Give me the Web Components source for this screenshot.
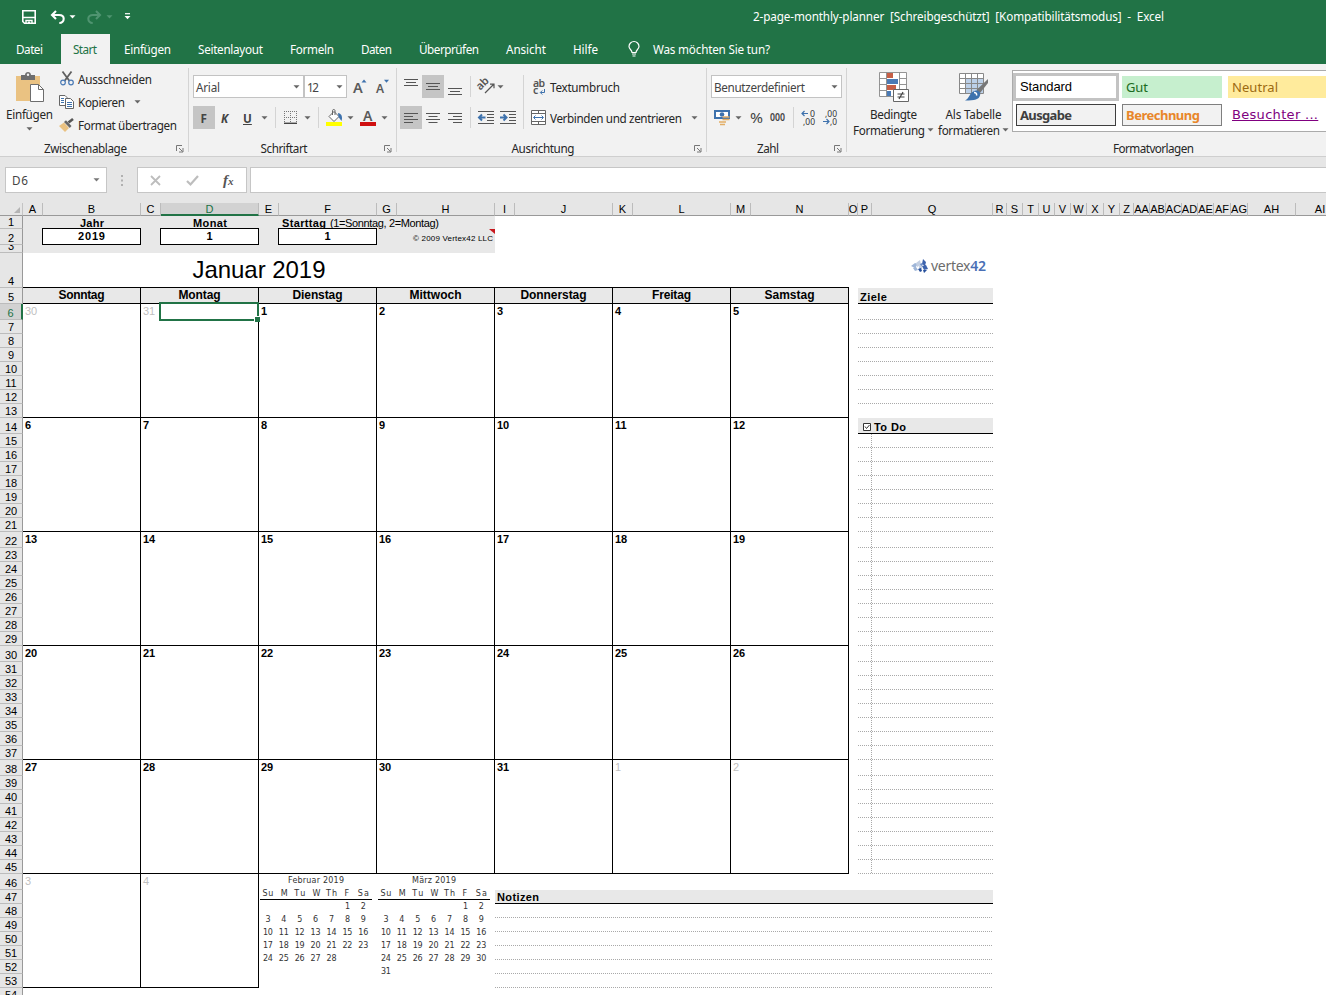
<!DOCTYPE html>
<html lang="de">
<head>
<meta charset="utf-8">
<title>2-page-monthly-planner - Excel</title>
<style>
  html, body { margin: 0; height: 100%; overflow: hidden; background: #fff; }
</style>
</head>
<body>
<planner-app></planner-app>
<script>
const ICONS = {
  save: [14, 14, `<path d="M.8.8h12.4v12.4H2.5L.8 11.5z" fill="none" stroke="#fff" stroke-width="1.6"/><path d="M1 7.500h12M4 13v-2.500h6V13" fill="none" stroke="#fff" stroke-width="1.4"/><path d="M6 11.500h2V13H6z" fill="#fff"/>`],
  undo: [15, 14, `<path d="M6 1 2 5l4 4M2.5 5H9c3 0 4.700 1.500 4.700 3.800S12 13 9.300 13" fill="none" stroke="#fff" stroke-width="2.100"/>`],
  redo: [15, 14, `<path d="M9 1l4 4-4 4M12.500 5H6C3 5 1.300 6.500 1.300 8.800S3 13 5.700 13" fill="none" stroke="#4f9470" stroke-width="2.100"/>`],
  more: [7, 7, `<path d="M1 .7h5" stroke="#fff" stroke-width="1.200"/><path d="M.5 3h6l-3 3.200z" fill="#fff"/>`],
  caret: [7, 4, `<path d="M.5.300h6L3.500 3.500z" fill="currentColor"/>`],
  bulb: [12, 16, `<path d="M4 11.500C4 9 1 8 1 5.500a5 5 0 0 1 10 0C11 8 8 9 8 11.500z" fill="none" stroke="#fff" stroke-width="1.200"/><path d="M4 13h4M4.500 15h3" stroke="#fff" stroke-width="1.200"/>`],
  paste: [30, 31, `<path d="M1 4h24v25H1z" fill="#eac282"/><path d="M6 3h4c0-4 6-4 6 0h4v5H6z" fill="#6d6d6d"/><circle cx="13" cy="2.800" r="1.200" fill="#f2f2f2"/><path d="M15.500 12.500h8l5 5v12h-13z" fill="#fff" stroke="#6d6d6d"/><path d="M23.500 12.500v5h5" fill="none" stroke="#6d6d6d"/>`],
  cut: [14, 15, `<path d="M2.500.500 9.500 10M11.500.500 4.500 10" stroke="#5f5f5f" stroke-width="1.800"/><circle cx="3" cy="11.500" r="2.300" fill="none" stroke="#4a7ab5" stroke-width="1.200"/><circle cx="11" cy="11.500" r="2.300" fill="none" stroke="#4a7ab5" stroke-width="1.200"/>`],
  copy: [15, 14, `<path d="M.500.500H6l2 2v8H.500z" fill="#fff" stroke="#666"/><path d="M6.500 3.500h5l3 3v7h-8z" fill="#fff" stroke="#666"/><path d="M2 3.500h3M2 5.500h3M2 7.500h3M8 7.500h5M8 9.500h5M8 11.500h5" stroke="#3e72ad"/>`],
  brush: [15, 14, `<path d="M5 4.500 10 10l-4 4L0 8z" fill="#eac282"/><path d="M5 4 7 2.200 12.500 8l-1.700 2z" fill="#666"/><path d="M9.500 4.500 14 1" stroke="#555" stroke-width="2.600"/>`],
  launcher: [8, 8, `<path d="M.500 6V.500H6" fill="none" stroke="#777"/><path d="m3 3 3.500 3.500" stroke="#777"/><path d="M7 3v4H3" fill="none" stroke="#777"/>`],
  grow: [14, 15, `<text x="0" y="13.500" font-size="14.500" font-weight="600" fill="#5a5a5a">A</text><path d="M8.500 3.500h5L11 .500z" fill="#3e72ad"/>`],
  shrink: [14, 15, `<text x="0" y="13.500" font-size="12" font-weight="600" fill="#5a5a5a">A</text><path d="M8 .800h5L10.500 3.800z" fill="#3e72ad"/>`],
  borders: [13, 13, `<path d="M.500 0v12M6.500 0v12M12.500 0v12M0 .500h13M0 6.500h13" stroke="#777" stroke-dasharray="1 1" fill="none"/><path d="M0 12.300h13" stroke="#444" stroke-width="1.400"/>`],
  fill: [17, 17, `<path d="M3 7.500 8 2.500l5 5-5 5z" fill="#fff" stroke="#666"/><path d="M6.500 6V1.500c0-1.300 2.500-1.300 2.500 0V6" fill="none" stroke="#666"/><path d="M12 4c3 .500 5 3 3.500 8l-3-4z" fill="#3e72ad"/><path d="M0 13h16v4H0z" fill="#ffff00"/>`],
  fontcolor: [16, 17, `<text x="3" y="11.500" font-size="14" font-weight="600" fill="#5a5a5a">A</text><path d="M0 13h16v4H0z" fill="#d01010"/>`],
  vtop: [14, 7, `<path d="M0 .500h14M2 3.500h10M0 6.500h14" stroke="#555"/>`],
  left: [14, 10, `<path d="M0 .500h14M0 3.500h9M0 6.500h14M0 9.500h9" stroke="#555"/>`],
  center: [14, 10, `<path d="M0 .500h14M2.500 3.500h9M0 6.500h14M2.500 9.500h9" stroke="#555"/>`],
  right: [14, 10, `<path d="M0 .500h14M5 3.500h9M0 6.500h14M5 9.500h9" stroke="#555"/>`],
  orient: [17, 15, `<text transform="translate(3 11) rotate(-45)" x="-1" y="0" font-size="11" font-weight="600" fill="#555">ab</text><path d="M7 14 15.500 5.500M12 5.200h4v4" fill="none" stroke="#555" stroke-width="1.200"/>`],
  outdent: [16, 13, `<path d="M0 .500h16M9 3.500h7M9 6.500h7M9 9.500h7M0 12.500h16" stroke="#555"/><path d="M7.500 6.500h-6M4 3.500l-3 3 3 3" fill="none" stroke="#3e72ad" stroke-width="2"/>`],
  indent: [16, 13, `<path d="M0 .500h16M9 3.500h7M9 6.500h7M9 9.500h7M0 12.500h16" stroke="#555"/><path d="M0 6.500h6M3.500 3.500l3 3-3 3" fill="none" stroke="#3e72ad" stroke-width="2"/>`],
  wrap: [13, 16, `<text x="0" y="7.500" font-size="10.500" font-weight="600" fill="#555" textLength="12">ab</text><text x="0" y="15" font-size="10.500" font-weight="600" fill="#555">c</text><path d="M11.500 10v3.500H7.500M9.300 11.500l-2 2 2 2" fill="none" stroke="#3e72ad"/>`],
  merge: [15, 15, `<path d="M.500.500h14v14H.500zM0 3.500h15M0 11.500h15M7.500 0v3.500M7.500 11.500V15" fill="#fff" stroke="#666"/><path d="M3 7.500h9M4.500 5.500l-2 2 2 2M10.500 5.500l2 2-2 2" fill="none" stroke="#3e72ad"/>`],
  money: [17, 17, `<path d="M0 1h16v9H0z" fill="#3e72ad"/><path d="M2 3h12v5H2z" fill="#fff"/><circle cx="8" cy="5.500" r="2.300" fill="#3e72ad"/><path d="M8.500 8h7M8.500 10.500h7M5 13h7M6 15.500h5" stroke="#e3ae66" stroke-width="1.700"/>`],
  percent: [13, 13, `<text x="0" y="12" font-size="15" fill="#444" textLength="13" lengthAdjust="spacingAndGlyphs">%</text>`],
  thousands: [15, 10, `<text x="0" y="8" font-size="10" font-weight="600" fill="#444" textLength="15" lengthAdjust="spacingAndGlyphs">000</text>`],
  decinc: [15, 15, `<text x="9" y="6.500" font-size="9" fill="#333" textLength="5" lengthAdjust="spacingAndGlyphs">0</text><text x="2" y="14.500" font-size="9" fill="#333" textLength="12" lengthAdjust="spacingAndGlyphs">,00</text><path d="M7 3.500H1M3.500 1 1 3.500 3.500 6" fill="none" stroke="#3e72ad" stroke-width="1.200"/>`],
  decdec: [15, 15, `<text x="2" y="6.500" font-size="9" fill="#333" textLength="12" lengthAdjust="spacingAndGlyphs">,00</text><text x="7" y="14.500" font-size="9" fill="#333" textLength="7" lengthAdjust="spacingAndGlyphs">,0</text><path d="M0 11.500h6M3.500 9 6 11.500 3.500 14" fill="none" stroke="#3e72ad" stroke-width="1.200"/>`],
  conditional: [30, 31, `<path d="M.500.500h27v24H.500z" fill="#fff"/><path d="M8 1h6v5H8zM8 13h9v5H8z" fill="#c65f46"/><path d="M8 7h11v5H8zM8 19h4v5H8z" fill="#4a7ab5"/><path d="M.500.500h27v24H.500zM.500 6.500h7M20.500 6.500h7M.500 12.500h7M20.500 12.500h7M.500 18.500h7M7.500.500v24M20.500.500v24" fill="none" stroke="#888" stroke-width=".9"/><path d="M14.500 17.500h15v12h-15z" fill="#fff" stroke="#666"/><path d="M18.500 22h7M18.500 25h7M24 20l-4 7" stroke="#444" stroke-width="1.200"/>`],
  table: [30, 30, `<path d="M.500.500h24v20H.500z" fill="#fff"/><path d="M7 6h17.500v14.500H7z" fill="#bcd0e8"/><path d="M.500.500h24v20H.500zM.500 5.500h24M.500 10.500h24M.500 15.500h24M6.500.500v20M12.500.500v20M18.500.500v20" fill="none" stroke="#888"/><path d="M29 6v4l-8 10-3.500-3z" fill="#777"/><path d="M17 17.500c3 0 5 2 4 5-1 4-5 5-15 5 5-2 4-9 11-10z" fill="#3e72ad"/><path d="M15 19.500c2 0 3 1 2.500 3" fill="none" stroke="#fff" stroke-width="1.500"/>`],
  cancel: [11, 11, `<path d="m1 1 9 9M10 1l-9 9" stroke="#bdbdbd" stroke-width="1.800"/>`],
  accept: [13, 11, `<path d="m1 6 3.500 3.500L12 1" fill="none" stroke="#bdbdbd" stroke-width="2.200"/>`],
  dots: [2, 12, `<path d="M0 0h2v2H0zM0 4.500h2v2H0zM0 9h2v2H0z" fill="#b0b0b0"/>`],
  corner: [6, 6, `<path d="M6 0v6H0z" fill="#b4b4b4"/>`],
  note: [6, 5, `<path d="M0 0h6v5z" fill="#c8171d"/>`],
  check: [8, 8, `<path d="M.500.500h7v7h-7z" fill="#fff" stroke="#333"/><path d="m2 3.500 1.500 2L6.500 2" fill="none" stroke="#333"/>`],
  vertex: [17, 15, `<path d="M0 7l4-3 3 1-3 4zM2 9l3-1 2 3-3 1z" fill="#9fb6d8"/><path d="m5 4 4-3 1 5-4 2zM8 7l3-1v4H8z" fill="#c3cfe2"/><path d="m12 0 3 3-1 4-3-2zM11 7l4-1 2 4-4 1z" fill="#3d63ad"/><path d="m7 10 3-1 1 3-2 1zM12 11l4 0-3 3z" fill="#27509c"/><path d="m10 4 2 1-1 2-2-1z" fill="#6f8fc7"/>`],
};

class UiIcon extends HTMLElement {
  constructor() {
    super();
    this.attachShadow({ mode: 'open' });
  }

  connectedCallback() {
    const [w, h, art] = ICONS[this.getAttribute('name')];
    this.shadowRoot.innerHTML = `
      <style>
        :host { display: block; flex: none; width: ${w}px; height: ${h}px; }
        svg { display: block; overflow: visible; font-family: "Noto Sans", sans-serif; }
      </style>
      <svg width="${w}" height="${h}" viewBox="0 0 ${w} ${h}">${art}</svg>
    `;
  }
}
customElements.define('ui-icon', UiIcon);

// Text with a fixed advance: tracking is adjusted until it fills `w` pixels.
class UiLabel extends HTMLElement {
  constructor() {
    super();
    this.attachShadow({ mode: 'open' });
  }

  connectedCallback() {
    const w = Number(this.getAttribute('w'));
    this.shadowRoot.innerHTML = `
      <style>
        :host { display: flex; flex: none; width: ${w}px; line-height: 16px; }
        span { flex: none; white-space: pre; }
      </style>
      <span><slot></slot></span>
    `;
    const span = this.shadowRoot.querySelector('span');
    const count = this.textContent.length;
    if (count > 1) {
      const natural = span.getBoundingClientRect().width;
      span.style.letterSpacing = `${(w - natural) / (count - 1)}px`;
    }
  }
}
customElements.define('ui-label', UiLabel);

class TitleBar extends HTMLElement {
  constructor() {
    super();
    this.attachShadow({ mode: 'open' });
  }

  connectedCallback() {
    this.shadowRoot.innerHTML = `
      <style>
        :host {
          display: flex;
          flex: none;
          align-items: center;
          box-sizing: border-box;
          height: 34px;
          padding: 0 0 1px 22px;
          background: #217346;
          color: #fff;
        }
        .undo { margin-left: 14px; }
        .drop { margin-left: 4px; }
        .redo { margin-left: 11px; }
        .faded { color: #4f9470; }
        .more { margin-left: 11px; }
        .title { margin: -2px 0 0 622px; }
      </style>
      <ui-icon name="save"></ui-icon>
      <ui-icon class="undo" name="undo"></ui-icon>
      <ui-icon class="drop" name="caret"></ui-icon>
      <ui-icon class="redo" name="redo"></ui-icon>
      <ui-icon class="drop faded" name="caret"></ui-icon>
      <ui-icon class="more" name="more"></ui-icon>
      <ui-label class="title" w="411">2-page-monthly-planner  [Schreibgeschützt]  [Kompatibilitätsmodus]  -  Excel</ui-label>
    `;
  }
}
customElements.define('title-bar', TitleBar);

class RibbonTabs extends HTMLElement {
  constructor() {
    super();
    this.attachShadow({ mode: 'open' });
  }

  connectedCallback() {
    const tabs = [
      ['Datei', 27], ['Start', 24], ['Einfügen', 47], ['Seitenlayout', 65], ['Formeln', 44],
      ['Daten', 31], ['Überprüfen', 60], ['Ansicht', 40], ['Hilfe', 25],
    ];
    this.shadowRoot.innerHTML = `
      <style>
        :host { display: flex; flex: none; height: 30px; padding-left: 2px; background: #217346; color: #fff; }
        .tab { display: flex; align-items: center; padding: 0 13px 0 14px; }
        .active { margin: 0 1px 0 5px; padding: 0 13px 0 12px; background: #f2f2f2; color: #217346; }
        .active + .tab { padding-left: 13px; }
        .ask { display: flex; align-items: center; gap: 13px; margin-left: 17px; }
      </style>
      ${tabs.map(([name, w]) => `
        <div class="tab ${name === 'Start' ? 'active' : ''}"><ui-label w="${w}">${name}</ui-label></div>
      `).join('')}
      <div class="ask"><ui-icon name="bulb"></ui-icon><ui-label w="117">Was möchten Sie tun?</ui-label></div>
    `;
  }
}
customElements.define('ribbon-tabs', RibbonTabs);

class RibbonGroup extends HTMLElement {
  constructor() {
    super();
    this.attachShadow({ mode: 'open' });
  }

  connectedCallback() {
    const launcher = this.hasAttribute('launcher') ? '<ui-icon name="launcher"></ui-icon>' : '';
    this.shadowRoot.innerHTML = `
      <style>
        :host {
          display: flex;
          flex: none;
          flex-direction: column;
          box-sizing: border-box;
          width: ${this.getAttribute('width')}px;
        }
        .inner {
          flex: none;
          box-sizing: border-box;
          height: 84px;
          margin-top: 4px;
          border-right: 1px solid #d4d4d4;
        }
        .body { height: 72px; }
        .caption { display: grid; grid-template-columns: 1fr auto 1fr; align-items: center; height: 16px; }
        .caption ui-label { grid-column: 2; }
        .caption ui-icon { justify-self: end; margin: 1px -13px 0 0; }
        :host([launcher]) .caption { padding-right: 17px; }
      </style>
      <div class="inner">
        <div class="body"><slot></slot></div>
        <div class="caption"><ui-label w="${this.getAttribute('caption-width')}">${this.getAttribute('caption')}</ui-label>${launcher}</div>
      </div>
    `;
  }
}
customElements.define('ribbon-group', RibbonGroup);

class ComboBox extends HTMLElement {
  constructor() {
    super();
    this.attachShadow({ mode: 'open' });
  }

  connectedCallback() {
    this.shadowRoot.innerHTML = `
      <style>
        :host {
          display: flex;
          flex: none;
          align-items: center;
          justify-content: space-between;
          box-sizing: border-box;
          width: ${this.getAttribute('width')}px;
          height: 23px;
          padding: 0 3px 0 2px;
          border: 1px solid #c3c3c3;
          background: #fff;
          color: #444;
        }
        ui-icon { color: #666; }
      </style>
      <slot></slot><ui-icon name="caret"></ui-icon>
    `;
  }
}
customElements.define('combo-box', ComboBox);

class RibbonBar extends HTMLElement {
  constructor() {
    super();
    this.attachShadow({ mode: 'open' });
  }

  connectedCallback() {
    const gap = (px) => `style="margin-left:${px}px"`;
    this.shadowRoot.innerHTML = `
      <style>
        :host {
          display: flex;
          flex: none;
          box-sizing: border-box;
          height: 93px;
          overflow: hidden;
          border-bottom: 1px solid #cfcfcf;
          background: #f2f2f2;
          color: #262626;
        }
        .row { display: flex; align-items: center; height: 23px; }
        .row + .row { margin-top: 8px; }
        .rows { padding-top: 7px; }
        .sep { flex: none; width: 1px; height: 21px; background: #d4d4d4; }
        .tall { height: 54px; }
        .caret { color: #666; }
        .on { display: flex; align-items: center; justify-content: center; width: 22px; height: 23px; background: #c5c5c5; }
        .clip { display: flex; }
        .commands { margin-top: -1px; }
        .commands .row + .row { margin-top: 0; }
        .paste { display: flex; flex-direction: column; align-items: center; width: 59px; padding-top: 4px; }
        .paste ui-label { margin-top: 3px; }
        .paste .caret { margin-top: 5px; }
        .glyph { color: #444; font-weight: 700; }
        .align { display: flex; }
        .styles { display: flex; }
        .big { display: flex; flex-direction: column; align-items: center; padding-top: 4px; }
        .big .line { display: flex; align-items: center; height: 16px; gap: 2px; }
        .gallery {
          display: grid;
          grid-template-columns: 106px 106px 106px;
          grid-template-rows: 28px 28px;
          align-content: start;
          flex: none;
          width: 330px;
          height: 58px;
          margin: 2px 0 0 3px;
          padding: 2px 0 0 0;
          border: 1px solid #ababab;
          background: #fff;
          font-size: 13px;
        }
        .tile {
          display: flex;
          align-items: center;
          box-sizing: border-box;
          width: 100px;
          height: 22px;
          margin: 3px;
          padding-left: 4px;
        }
        .standard { width: 106px; height: 28px; margin: 0; padding-left: 4px; border: 3px solid #c3c3c3; color: #000; font-family: "Liberation Sans", sans-serif; }
        .good { background: #c6efce; color: #1b6b20; }
        .neutral { width: 120px; background: #ffeb9c; color: #9c6a10; }
        .output { border: 1px solid #3f3f3f; background: #f2f2f2; color: #3f3f3f; font-weight: 700; padding-left: 3px; }
        .calc { border: 1px solid #7f7f7f; background: #f2f2f2; color: #e8862a; font-weight: 700; padding-left: 3px; }
        .visited { color: #800080; font-family: "DejaVu Sans", sans-serif; text-decoration: underline; }
      </style>
      <ribbon-group width="189" caption="Zwischenablage" caption-width="83" launcher>
        <div class="clip">
          <div class="paste">
            <ui-icon name="paste"></ui-icon>
            <ui-label w="47">Einfügen</ui-label>
            <ui-icon class="caret" name="caret"></ui-icon>
          </div>
          <div class="commands">
            <div class="row"><ui-icon ${gap(1)} name="cut"></ui-icon><ui-label ${gap(4)} w="74">Ausschneiden</ui-label></div>
            <div class="row"><ui-icon name="copy"></ui-icon><ui-label ${gap(4)} w="47">Kopieren</ui-label><ui-icon class="caret" ${gap(9)} name="caret"></ui-icon></div>
            <div class="row"><ui-icon name="brush"></ui-icon><ui-label ${gap(4)} w="99">Format übertragen</ui-label></div>
          </div>
        </div>
      </ribbon-group>
      <ribbon-group width="208" caption="Schriftart" caption-width="47" launcher>
        <div class="rows">
          <div class="row" style="padding-left:4px">
            <combo-box width="111"><ui-label w="24">Arial</ui-label></combo-box>
            <combo-box width="43"><ui-label w="12">12</ui-label></combo-box>
            <ui-icon ${gap(6)} name="grow"></ui-icon>
            <ui-icon ${gap(9)} name="shrink"></ui-icon>
          </div>
          <div class="row" style="padding-left:4px">
            <div class="on glyph"><ui-label w="7">F</ui-label></div>
            <ui-label class="glyph" ${gap(6)} w="8"><i>K</i></ui-label>
            <ui-label class="glyph" ${gap(14)} w="9"><u>U</u></ui-label>
            <ui-icon class="caret" ${gap(9)} name="caret"></ui-icon>
            <div class="sep" ${gap(7)}></div>
            <ui-icon ${gap(8)} name="borders"></ui-icon>
            <ui-icon class="caret" ${gap(7)} name="caret"></ui-icon>
            <div class="sep" ${gap(7)}></div>
            <ui-icon ${gap(7)} name="fill"></ui-icon>
            <ui-icon class="caret" ${gap(4)} name="caret"></ui-icon>
            <ui-icon ${gap(6)} name="fontcolor"></ui-icon>
            <ui-icon class="caret" ${gap(5)} name="caret"></ui-icon>
          </div>
        </div>
      </ribbon-group>
      <ribbon-group width="310" caption="Ausrichtung" caption-width="63" launcher>
        <div class="rows align">
          <div>
            <div class="row" style="padding-left:3px">
              <ui-icon style="margin:0 0 9px 4px" name="vtop"></ui-icon>
              <div class="on" ${gap(4)}><ui-icon name="vtop"></ui-icon></div>
              <ui-icon style="margin:9px 0 0 4px" name="vtop"></ui-icon>
              <div class="sep" ${gap(8)}></div>
              <ui-icon ${gap(7)} name="orient"></ui-icon>
              <ui-icon class="caret" ${gap(2)} name="caret"></ui-icon>
            </div>
            <div class="row" style="padding-left:3px">
              <div class="on"><ui-icon name="left"></ui-icon></div>
              <ui-icon ${gap(4)} name="center"></ui-icon>
              <ui-icon ${gap(8)} name="right"></ui-icon>
              <div class="sep" ${gap(8)}></div>
              <ui-icon ${gap(7)} name="outdent"></ui-icon>
              <ui-icon ${gap(6)} name="indent"></ui-icon>
            </div>
          </div>
          <div class="sep tall" ${gap(7)}></div>
          <div>
            <div class="row"><ui-icon ${gap(9)} name="wrap"></ui-icon><ui-label ${gap(4)} w="70">Textumbruch</ui-label></div>
            <div class="row"><ui-icon ${gap(7)} name="merge"></ui-icon><ui-label ${gap(4)} w="132">Verbinden und zentrieren</ui-label><ui-icon class="caret" ${gap(9)} name="caret"></ui-icon></div>
          </div>
        </div>
      </ribbon-group>
      <ribbon-group width="140" caption="Zahl" caption-width="22" launcher>
        <div class="rows">
          <div class="row" style="padding-left:4px"><combo-box width="131"><ui-label w="91">Benutzerdefiniert</ui-label></combo-box></div>
          <div class="row" style="padding-left:7px">
            <ui-icon name="money"></ui-icon>
            <ui-icon class="caret" ${gap(4)} name="caret"></ui-icon>
            <ui-icon ${gap(8)} name="percent"></ui-icon>
            <ui-icon ${gap(7)} name="thousands"></ui-icon>
            <div class="sep" ${gap(8)}></div>
            <ui-icon ${gap(7)} name="decinc"></ui-icon>
            <ui-icon ${gap(7)} name="decdec"></ui-icon>
          </div>
        </div>
      </ribbon-group>
      <ribbon-group width="614" caption="Formatvorlagen" caption-width="81">
        <div class="styles">
          <div class="big" ${gap(6)}>
            <ui-icon name="conditional"></ui-icon>
            <div class="line" style="margin-top:3px"><ui-label w="47">Bedingte</ui-label></div>
            <div class="line"><ui-label w="72">Formatierung</ui-label><ui-icon class="caret" name="caret"></ui-icon></div>
          </div>
          <div class="big" ${gap(4)}>
            <ui-icon style="margin-top:1px" name="table"></ui-icon>
            <div class="line" style="margin-top:3px"><ui-label w="56">Als Tabelle</ui-label></div>
            <div class="line"><ui-label w="62">formatieren</ui-label><ui-icon class="caret" name="caret"></ui-icon></div>
          </div>
          <div class="gallery">
            <div class="tile standard"><ui-label w="52">Standard</ui-label></div>
            <div class="tile good"><ui-label w="22">Gut</ui-label></div>
            <div class="tile neutral"><ui-label w="46">Neutral</ui-label></div>
            <div class="tile output"><ui-label w="52">Ausgabe</ui-label></div>
            <div class="tile calc"><ui-label w="74">Berechnung</ui-label></div>
            <div class="tile visited"><ui-label w="86">Besuchter ...</ui-label></div>
          </div>
        </div>
      </ribbon-group>
    `;
  }
}
customElements.define('ribbon-bar', RibbonBar);

class FormulaBar extends HTMLElement {
  constructor() {
    super();
    this.attachShadow({ mode: 'open' });
  }

  connectedCallback() {
    this.shadowRoot.innerHTML = `
      <style>
        :host { display: flex; flex: none; box-sizing: border-box; height: 46px; padding: 10px 0 0 5px; background: #e6e6e6; color: #444; }
        .box { display: flex; align-items: center; box-sizing: border-box; height: 26px; border: 1px solid #c6c6c6; background: #fff; }
        .name { justify-content: space-between; width: 102px; padding: 0 6px; }
        .name ui-icon { color: #777; }
        .dots { margin: 8px 14px 0; }
        .tools { width: 110px; padding-left: 12px; }
        .fx { margin-left: 24px; color: #555; font: italic 700 15px/22px "Liberation Serif", serif; }
        .fx small { font-size: 11px; }
        .input { flex: 1; margin-left: 3px; border-right: 0; }
      </style>
      <div class="box name"><ui-label w="16">D6</ui-label><ui-icon name="caret"></ui-icon></div>
      <ui-icon class="dots" name="dots"></ui-icon>
      <div class="box tools">
        <ui-icon name="cancel"></ui-icon>
        <ui-icon style="margin-left:25px" name="accept"></ui-icon>
        <div class="fx">f<small>x</small></div>
      </div>
      <div class="box input"></div>
    `;
  }
}
customElements.define('formula-bar', FormulaBar);

class MiniMonth extends HTMLElement {
  constructor() {
    super();
    this.attachShadow({ mode: 'open' });
  }

  connectedCallback() {
    const first = Number(this.getAttribute('first'));
    const days = Number(this.getAttribute('days'));
    const names = ['Su', 'M', 'Tu', 'W', 'Th', 'F', 'Sa'];
    const cells = Array.from({ length: 42 }, (_, i) => {
      const day = i - first + 1;
      return day > 0 && day <= days ? day : '';
    });
    const cell = (text, w) => (text ? `<div><ui-label w="${w}">${text}</ui-label></div>` : '<div></div>');
    this.shadowRoot.innerHTML = `
      <style>
        :host { display: block; padding-left: 1px; color: #333; font: 8px "DejaVu Sans", sans-serif; }
        .title, .week div { display: flex; justify-content: center; align-items: center; height: 13px; }
        .title { width: 112px; }
        .week { display: grid; grid-template-columns: repeat(7, 15.900px); width: 112px; }
        .names { height: 12px; border-bottom: 1px solid #000; }
        .days { grid-auto-rows: 13.200px; }
      </style>
      <div class="title"><ui-label w="${this.getAttribute('title-width')}">${this.getAttribute('month')}</ui-label></div>
      <div class="week names">${names.map((n) => cell(n, n.length > 1 ? 11 : 6)).join('')}</div>
      <div class="week days">${cells.map((d) => cell(d, d > 9 ? 10 : 5)).join('')}</div>
    `;
  }
}
customElements.define('mini-month', MiniMonth);

class WorkSheet extends HTMLElement {
  constructor() {
    super();
    this.attachShadow({ mode: 'open' });
    this.edges = [23, 43, 141, 161, 259, 279, 377, 397, 495, 515, 613, 633, 731, 751, 849, 858, 872, 993,
      1007, 1023, 1039, 1055, 1071, 1087, 1104, 1120, 1134, 1150, 1166, 1182, 1198, 1214, 1231, 1248, 1296, 1345];
    this.tall = [6, 14, 22, 30, 38, 46];
  }

  columnName(i) {
    return i < 26 ? String.fromCharCode(65 + i) : `A${String.fromCharCode(39 + i)}`;
  }

  rowHeight(row) {
    const top = { 1: 13, 2: 16, 3: 8, 4: 35, 5: 16 };
    return top[row] || (this.tall.includes(row) ? 16 : 14);
  }

  // Sheet column A is grid line 2 and sheet row 1 is grid line 2.
  area(row, col, rows = 1, cols = 1) {
    return `grid-area:${row + 1}/${col + 2}/span ${rows}/span ${cols}`;
  }

  headers() {
    let html = '<div class="all"><ui-icon name="corner"></ui-icon></div>';
    for (let i = 0; i < this.edges.length - 1; i += 1) {
      const name = this.columnName(i);
      html += `<div class="col ${name === 'D' ? 'picked' : ''}" style="grid-area:1/${i + 2}">${name}</div>`;
    }
    for (let row = 1; row <= 54; row += 1) {
      html += `<div class="rowhead ${row === 6 ? 'picked' : ''}" style="grid-area:${row + 1}/1"><span>${row}</span></div>`;
    }
    return html;
  }

  calendar() {
    const names = [['Sonntag', 46], ['Montag', 42], ['Dienstag', 50], ['Mittwoch', 52], ['Donnerstag', 66], ['Freitag', 39], ['Samstag', 50]];
    let html = names.map(([name, w], i) => `
      <div class="dayname" style="${this.area(5, i * 2, 1, 2)}"><ui-label w="${w}">${name}</ui-label></div>
    `).join('');
    for (let i = 0; i < 37; i += 1) {
      const day = new Date(2018, 11, 30 + i);
      const other = day.getMonth() === 0 && i < 33 ? '' : 'other';
      const week = Math.floor(i / 7);
      html += `<div class="day ${other}" style="${this.area(6 + week * 8, (i % 7) * 2, 8, 2)}">${day.getDate()}</div>`;
    }
    return html;
  }

  rules() {
    let html = '';
    for (let row = 6; row <= 12; row += 1) {
      html += `<div class="rule" style="${this.area(row, 15, 1, 2)}"></div>`;
    }
    for (let row = 15; row <= 45; row += 1) {
      html += `<div class="rule" style="${this.area(row, 15, 1, 2)}"></div>`;
    }
    for (let row = 48; row <= 53; row += 1) {
      html += `<div class="rule" style="${this.area(row, 8, 1, 9)}"></div>`;
    }
    return html;
  }

  connectedCallback() {
    const widths = this.edges.slice(1).map((edge, i) => `${edge - this.edges[i]}px`).join(' ');
    const heights = Array.from({ length: 54 }, (_, i) => `${this.rowHeight(i + 1)}px`).join(' ');
    this.shadowRoot.innerHTML = `
      <style>
        :host {
          display: grid;
          flex: none;
          grid-template-columns: 23px ${widths};
          grid-template-rows: 13px ${heights};
          color: #000;
          font: 11px/13px "Liberation Sans", Arial, sans-serif;
        }
        .all, .col, .rowhead { box-sizing: border-box; background: #e6e6e6; overflow: hidden; }
        .all { grid-area: 1 / 1; display: flex; align-items: flex-end; justify-content: flex-end; padding: 0 2px 2px 0; border-right: 1px solid #c4c4c4; border-bottom: 1px solid #999; }
        .col { display: flex; justify-content: center; border-right: 1px solid #bcbcbc; border-bottom: 1px solid #999; white-space: nowrap; }
        .col.picked { border-bottom: 2px solid #217346; background: #d2d2d2; color: #217346; }
        .rowhead { display: flex; align-items: flex-end; justify-content: center; border-right: 1px solid #999; border-bottom: 1px solid #bcbcbc; line-height: 12px; }
        .rowhead.picked { border-right: 2px solid #217346; background: #d2d2d2; color: #217346; }
        .band { background: #e8e8e8; }
        .field { display: flex; align-items: center; justify-content: center; margin: -1px 0 0 -1px; border: 1px solid #000; background: #fff; font-weight: 700; box-sizing: border-box; }
        .field ui-label { margin-top: -1px; }
        .caption { display: flex; align-items: center; justify-content: center; height: 13px; font-weight: 700; }
        .start { justify-content: flex-start; gap: 4px; padding-left: 3px; }
        .start .plain { font-weight: 400; }
        .rights { display: flex; align-items: center; justify-content: flex-end; padding: 4px 2px 0 0; font-size: 8px; height: 12px; }
        .flag { justify-self: end; }
        .title { display: flex; align-items: center; justify-content: center; margin-top: -2px; font-size: 24px; }
        .edge { border-bottom: 1px solid #000; }
        .dayname { display: flex; align-items: center; justify-content: center; padding-bottom: 1px; border: solid #000; border-width: 0 1px 1px 0; box-sizing: border-box; background: #e8e8e8; font-size: 12px; font-weight: 700; }
        .dayname ui-label { margin-top: -1px; }
        .day { box-sizing: border-box; padding: 1px 2px; border: solid #000; border-width: 0 1px 1px 0; font-weight: 700; }
        .other { color: #bfbfbf; font-weight: 400; }
        .selected { position: relative; box-sizing: border-box; margin: -2px 0 -1px -2px; border: 2px solid #217346; }
        .selected::after { content: ""; position: absolute; right: -3px; bottom: -3px; width: 5px; height: 5px; border: solid #fff; border-width: 1px 0 0 1px; background: #217346; }
        .head { display: flex; align-items: flex-end; box-sizing: border-box; padding-left: 2px; border-bottom: 1px solid #000; background: #e8e8e8; font-weight: 700; }
        .head ui-label { height: 14px; }
        .head ui-icon { margin: 0 3px 2px 3px; }
        .rule { box-sizing: border-box; background: repeating-linear-gradient(90deg, #a9a9a9 0 1px, transparent 1px 2px) bottom / 100% 1px no-repeat; }
        .ticks { background: repeating-linear-gradient(#a9a9a9 0 1px, transparent 1px 2px) right / 1px 100% no-repeat; }
        .logo { display: flex; align-items: center; justify-content: flex-end; gap: 3px; padding: 0 7px 9px 0; color: #6c6c6c; font: 14px "Noto Sans", sans-serif; }
        .logo b { color: #4a6fb5; font-weight: 600; }
      </style>
      ${this.headers()}
      <div class="band" style="${this.area(1, 0, 3, 8)}"></div>
      <div class="caption" style="${this.area(1, 1)}"><ui-label w="24">Jahr</ui-label></div>
      <div class="caption" style="${this.area(1, 3)}"><ui-label w="34">Monat</ui-label></div>
      <div class="caption start" style="${this.area(1, 5, 1, 3)}"><ui-label w="44">Starttag</ui-label><ui-label class="plain" w="109">(1=Sonntag, 2=Montag)</ui-label></div>
      <div class="field" style="${this.area(2, 1)}"><ui-label w="27">2019</ui-label></div>
      <div class="field" style="${this.area(2, 3)}">1</div>
      <div class="field" style="${this.area(2, 5)}">1</div>
      <div class="rights" style="${this.area(2, 6, 1, 2)}"><ui-label w="80">© 2009 Vertex42 LLC</ui-label></div>
      <ui-icon class="flag" name="note" style="${this.area(2, 7)}"></ui-icon>
      <div class="edge" style="${this.area(4, 0, 1, 14)}"></div>
      <div class="title" style="${this.area(4, 0, 1, 8)}"><ui-label w="133">Januar 2019</ui-label></div>
      <div class="logo" style="${this.area(4, 16)}"><ui-icon name="vertex"></ui-icon><ui-label w="55">vertex<b>42</b></ui-label></div>
      ${this.calendar()}
      <div class="selected" style="${this.area(6, 3)}"></div>
      <div class="head" style="${this.area(5, 15, 1, 2)}"><ui-label w="27">Ziele</ui-label></div>
      <div class="head" style="${this.area(14, 15, 1, 2)}"><ui-icon name="check"></ui-icon><ui-label w="32">To Do</ui-label></div>
      <div class="head" style="${this.area(47, 8, 1, 9)}"><ui-label w="42">Notizen</ui-label></div>
      ${this.rules()}
      <div class="ticks" style="${this.area(15, 15, 31, 1)}"></div>
      <mini-month style="${this.area(46, 4, 8, 2)}" month="Februar 2019" title-width="56" first="5" days="28"></mini-month>
      <mini-month style="${this.area(46, 6, 8, 2)}" month="März 2019" title-width="44" first="5" days="31"></mini-month>
    `;
  }
}
customElements.define('work-sheet', WorkSheet);

class PlannerApp extends HTMLElement {
  constructor() {
    super();
    this.attachShadow({ mode: 'open' });
  }

  connectedCallback() {
    this.shadowRoot.innerHTML = `
      <style>
        :host {
          display: flex;
          flex-direction: column;
          width: 1326px;
          height: 995px;
          overflow: hidden;
          background: #fff;
          font: 11.7px/16px "Noto Sans", "Open Sans", sans-serif;
        }
      </style>
      <title-bar></title-bar>
      <ribbon-tabs></ribbon-tabs>
      <ribbon-bar></ribbon-bar>
      <formula-bar></formula-bar>
      <work-sheet></work-sheet>
    `;
  }
}
customElements.define('planner-app', PlannerApp);
</script>
</body>
</html>
